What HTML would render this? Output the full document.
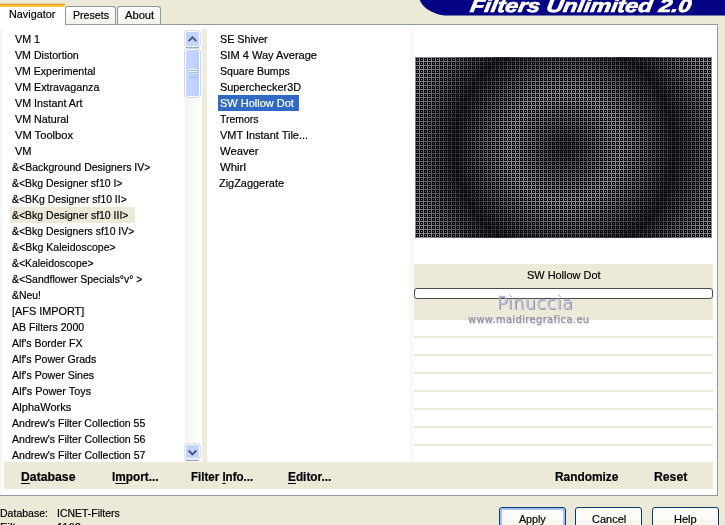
<!DOCTYPE html>
<html lang="en"><head><meta charset="utf-8"><title>Filters Unlimited 2.0</title>
<style>
html,body{margin:0;padding:0}
body{width:725px;height:525px;overflow:hidden;background:#ECE9D8;position:relative;font-family:"Liberation Sans",sans-serif;font-size:12px;color:#000}
.a{position:absolute;box-sizing:border-box}
.t{position:absolute;white-space:pre;transform-origin:0 0;line-height:20px;height:20px;font-size:11.6px;-webkit-text-stroke:0.2px}
.t.b{font-weight:bold;font-size:12.4px}
.t.b u{text-decoration-thickness:1px;text-underline-offset:1.7px}
.t.ban{font-weight:bold;font-style:italic;font-size:18.5px;color:#FFFFF6;-webkit-text-stroke:0.7px}
.sk{display:inline-block;transform:skewX(-7deg);transform-origin:0 100%}
.t.wm1{font-family:"DejaVu Sans Light","DejaVu Sans","Liberation Sans",sans-serif;font-weight:200;font-size:18.5px;letter-spacing:0.4px;color:#B6B8DE;-webkit-text-stroke:0.5px;text-shadow:1px 1px 0 #7c7c88}
.t.wm2{font-family:"DejaVu Sans","Liberation Sans",sans-serif;font-size:11px;letter-spacing:0.5px;color:#8C8CA6;text-shadow:1px 1px 1px #d0d0d8}
/* panel */
#panel{left:0;top:24px;width:718px;height:472px;background:#fff;border:1px solid #919B9C;border-left:0}
#banner{left:400px;top:0}
.tab{top:6px;height:18px;border:1px solid #919B9C;border-bottom:0;border-radius:3px 3px 0 0;background:linear-gradient(#FFFFFF,#F3F3EC)}
#tab0{left:0;top:3px;width:65.3px;height:22px;background:#fff;border-radius:0 2px 0 0;overflow:hidden}
#tab0:before{content:"";position:absolute;left:0;right:0;top:0;height:4px;background:linear-gradient(#EACDA4 0,#EACDA4 1px,#E89A33 1px,#E89A33 2px,#FFC73C 2px)}
.sep{background:#EFECDD}
.hl{background:#ECE9D8}
.sel{background:#316AC5}
#bar{left:4px;top:462px;width:709px;height:27px;background:#ECE9D8}
#rp{left:414px;top:30px;width:299px;height:432px;background:#fff}
.row{left:414px;width:299px;height:2px;background:#ECE9D8}
#prog{left:414px;top:288px;width:299px;height:11px;border:1px solid #4a4a4a;border-radius:3px;background:#fff}
.btn{top:507px;height:24px;width:67px;border:1px solid #003C74;border-radius:3px;background:linear-gradient(#FFFFFF,#F3F2EA)}
#bt0{box-shadow:inset 0 0 0 2px #A9C0F0}
/* scrollbar */
#sb{left:185px;top:30px;width:17px;height:432px;background:linear-gradient(90deg,#F6F5F1,#FEFEFC)}
.sbb{left:184.9px;width:15.4px;height:15.7px;background:#C3D5FD;border:1.1px solid #fff;border-radius:2.5px;box-shadow:0 0 0 0.5px #B4C4E8}
#thumb{left:184.8px;top:48.5px;width:15.4px;height:48.3px;background:linear-gradient(90deg,#C8D8FD,#BACDFB);border:1.2px solid #fff;border-radius:2.5px;box-shadow:0 0 0 0.5px #98B0E8}
#texts{position:absolute;left:0;top:0;width:725px;height:525px;will-change:transform}
.sbl{left:186px;width:13.3px;height:1px;background:#8EAAE6}

</style></head>
<body>
<svg class="a" id="banner" width="325" height="17" viewBox="400 0 325 17"><path d="M419.8,0 C421.5,6 431,14 444.5,15.6 L725,15.6 L725,0 Z" fill="#030384"/></svg>
<div class="a" id="panel"></div>
<div class="a tab" style="left:65px;width:51px"></div>
<div class="a tab" style="left:117px;width:44px"></div>
<div class="a" id="tab0"></div>
<div class="a sep" style="left:202px;top:29px;width:5px;height:433px"></div>
<div class="a" style="left:409px;top:29px;width:5px;height:433px;background:#FAF9F5"></div>
<div class="a hl" style="left:10px;top:207px;width:125px;height:16px"></div>
<div class="a sel" style="left:218px;top:95px;width:81px;height:16px"></div>
<div class="a" id="ledge" style="left:0;top:29px;width:2px;height:465px;background:#F7F6F2"></div>
<div class="a" id="sb"></div>
<div class="a sbb" style="top:31px"><svg width="14" height="14" viewBox="0 0 14 14" style="position:absolute;left:0;top:0"><path d="M2.6 9.1 L6.4 5.35 L10.3 9.1" fill="none" stroke="#44557D" stroke-width="1.9"/></svg></div>
<div class="a" id="thumb"><svg width="14" height="47" viewBox="0 0 14 47" style="position:absolute;left:0;top:0"><path d="M3 19.5h8M3 21.6h8M3 23.8h8M3 25.9h8" stroke="#F4F8FF" stroke-width="1"/><path d="M3.5 20.5h8M3.5 22.6h8M3.5 24.8h8M3.5 26.9h8" stroke="#9DB8F6" stroke-width="1"/></svg></div>
<div class="a sbl" style="top:47px"></div>
<div class="a sbl" style="top:460px"></div>
<div class="a sbb" style="top:443.6px"><svg width="14" height="14" viewBox="0 0 14 14" style="position:absolute;left:0;top:0"><path d="M2.7 5.5 L6.4 9.4 L10.25 5.5" fill="none" stroke="#44557D" stroke-width="1.9"/></svg></div>
<div class="a" id="rp"></div>
<svg class="a" id="prev" style="left:415px;top:57px" width="297" height="181" viewBox="0 0 297 181">
<defs>
<radialGradient id="rg" gradientUnits="userSpaceOnUse" cx="150" cy="91" r="110" spreadMethod="reflect">
<stop offset="0" stop-color="#34343a"/><stop offset="0.5" stop-color="#92929f"/><stop offset="1" stop-color="#2a2a30"/>
</radialGradient>
<pattern id="pt" width="4" height="4" patternUnits="userSpaceOnUse"><path d="M1 1h3v3h-3z M2 2v1h1v-1z" fill="#000" fill-rule="evenodd"/></pattern>
</defs>
<rect width="297" height="181" fill="url(#rg)"/>
<rect width="297" height="181" fill="url(#pt)"/>
</svg>
<div class="a" style="left:414px;top:264px;width:299px;height:56px;background:#ECE9D8"></div>
<div class="a" id="prog"></div>
<div class="a row" style="top:336px"></div>
<div class="a row" style="top:354px"></div>
<div class="a row" style="top:372px"></div>
<div class="a row" style="top:390px"></div>
<div class="a row" style="top:408px"></div>
<div class="a row" style="top:426px"></div>
<div class="a row" style="top:444px"></div>
<div class="a" id="bar"></div>
<div class="a btn" id="bt0" style="left:499px"></div>
<div class="a btn" style="left:575px"></div>
<div class="a btn" style="left:652px"></div>

<div id="texts">
<span class="t r" style="left:14.81px;top:28.70px;transform:scaleX(0.9255)">VM 1</span>
<span class="t r" style="left:14.81px;top:44.70px;transform:scaleX(0.9167)">VM Distortion</span>
<span class="t r" style="left:14.81px;top:60.70px;transform:scaleX(0.9106)">VM Experimental</span>
<span class="t r" style="left:14.81px;top:76.70px;transform:scaleX(0.9225)">VM Extravaganza</span>
<span class="t r" style="left:14.81px;top:92.70px;transform:scaleX(0.9277)">VM Instant Art</span>
<span class="t r" style="left:14.81px;top:108.70px;transform:scaleX(0.9261)">VM Natural</span>
<span class="t r" style="left:14.80px;top:124.70px;transform:scaleX(0.9613)">VM Toolbox</span>
<span class="t r" style="left:14.80px;top:140.70px;transform:scaleX(0.9481)">VM</span>
<span class="t r" style="left:12.23px;top:156.70px;transform:scaleX(0.9062)">&amp;&lt;Background Designers IV&gt;</span>
<span class="t r" style="left:12.23px;top:172.70px;transform:scaleX(0.9018)">&amp;&lt;Bkg Designer sf10 I&gt;</span>
<span class="t r" style="left:12.23px;top:188.70px;transform:scaleX(0.8993)">&amp;&lt;BKg Designer sf10 II&gt;</span>
<span class="t r" style="left:12.23px;top:204.70px;transform:scaleX(0.9035)">&amp;&lt;Bkg Designer sf10 III&gt;</span>
<span class="t r" style="left:12.23px;top:220.70px;transform:scaleX(0.8991)">&amp;&lt;Bkg Designers sf10 IV&gt;</span>
<span class="t r" style="left:12.23px;top:236.70px;transform:scaleX(0.9086)">&amp;&lt;Bkg Kaleidoscope&gt;</span>
<span class="t r" style="left:12.23px;top:252.70px;transform:scaleX(0.8972)">&amp;&lt;Kaleidoscope&gt;</span>
<span class="t r" style="left:12.23px;top:268.70px;transform:scaleX(0.9022)">&amp;&lt;Sandflower Specials°v° &gt;</span>
<span class="t r" style="left:12.23px;top:284.70px;transform:scaleX(0.8992)">&amp;Neu!</span>
<span class="t r" style="left:11.98px;top:300.70px;transform:scaleX(0.9373)">[AFS IMPORT]</span>
<span class="t r" style="left:11.53px;top:316.70px;transform:scaleX(0.9114)">AB Filters 2000</span>
<span class="t r" style="left:11.53px;top:332.70px;transform:scaleX(0.9077)">Alf&#x27;s Border FX</span>
<span class="t r" style="left:11.53px;top:348.70px;transform:scaleX(0.9112)">Alf&#x27;s Power Grads</span>
<span class="t r" style="left:11.53px;top:364.70px;transform:scaleX(0.9144)">Alf&#x27;s Power Sines</span>
<span class="t r" style="left:11.53px;top:380.70px;transform:scaleX(0.9368)">Alf&#x27;s Power Toys</span>
<span class="t r" style="left:11.52px;top:396.70px;transform:scaleX(0.9508)">AlphaWorks</span>
<span class="t r" style="left:11.53px;top:412.70px;transform:scaleX(0.9099)">Andrew&#x27;s Filter Collection 55</span>
<span class="t r" style="left:11.53px;top:428.70px;transform:scaleX(0.9101)">Andrew&#x27;s Filter Collection 56</span>
<span class="t r" style="left:11.53px;top:444.70px;transform:scaleX(0.9103)">Andrew&#x27;s Filter Collection 57</span>
<span class="t r" style="left:219.66px;top:28.70px;transform:scaleX(0.9251)">SE Shiver</span>
<span class="t r" style="left:219.64px;top:44.70px;transform:scaleX(0.9529)">SIM 4 Way Average</span>
<span class="t r" style="left:219.67px;top:60.70px;transform:scaleX(0.9098)">Square Bumps</span>
<span class="t r" style="left:219.65px;top:76.70px;transform:scaleX(0.9389)">Superchecker3D</span>
<span class="t r" style="left:219.65px;top:92.70px;transform:scaleX(0.9482);color:#fff">SW Hollow Dot</span>
<span class="t r" style="left:219.73px;top:108.70px;transform:scaleX(0.9021)">Tremors</span>
<span class="t r" style="left:219.50px;top:124.70px;transform:scaleX(0.9444)">VMT Instant Tile...</span>
<span class="t r" style="left:219.64px;top:140.70px;transform:scaleX(0.9713)">Weaver</span>
<span class="t r" style="left:219.64px;top:156.70px;transform:scaleX(0.9820)">Whirl</span>
<span class="t r" style="left:219.49px;top:172.70px;transform:scaleX(0.9425)">ZigZaggerate</span>
<span class="t r" style="left:8.84px;top:3.80px;transform:scaleX(0.9327)">Navigator</span>
<span class="t r" style="left:72.76px;top:5.00px;transform:scaleX(0.9156)">Presets</span>
<span class="t r" style="left:125.32px;top:5.00px;transform:scaleX(0.9634)">About</span>
<span class="t r" style="left:526.65px;top:265.40px;transform:scaleX(0.9430)">SW Hollow Dot</span>
<span class="t b" style="left:21.04px;top:467.00px;transform:scaleX(0.9883)"><u>D</u>atabase</span>
<span class="t b" style="left:111.97px;top:467.00px;transform:scaleX(0.9518)">I<u>m</u>port...</span>
<span class="t b" style="left:190.88px;top:467.00px;transform:scaleX(0.9306)">Filter <u>I</u>nfo...</span>
<span class="t b" style="left:287.97px;top:467.00px;transform:scaleX(0.9541)"><u>E</u>ditor...</span>
<span class="t b" style="left:554.86px;top:467.00px;transform:scaleX(0.9595)">Randomize</span>
<span class="t b" style="left:654.15px;top:467.00px;transform:scaleX(0.9856)">Reset</span>
<span class="t r" style="left:0.36px;top:502.50px;transform:scaleX(0.9081)">Database:</span>
<span class="t r" style="left:56.84px;top:502.50px;transform:scaleX(0.9013)">ICNET-Filters</span>
<span class="t r" style="left:0.26px;top:516.50px;transform:scaleX(1.0306)">Filters:</span>
<span class="t r" style="left:57.09px;top:516.50px;transform:scaleX(0.9573)">1162</span>
<span class="t r" style="left:518.63px;top:508.50px;transform:scaleX(0.9211)">Apply</span>
<span class="t r" style="left:592.11px;top:508.50px;transform:scaleX(0.9479)">Cancel</span>
<span class="t r" style="left:673.92px;top:508.50px;transform:scaleX(0.9516)">Help</span>
<span class="t ban" style="left:468.87px;top:-4.30px;transform:scaleX(1.2565)"><span class="sk">Filters Unlimited 2.0</span></span>
<span class="t wm1" style="left:496.99px;top:292.70px;transform:scaleX(0.9621)">Pinuccia</span>
<span class="t wm2" style="left:468.38px;top:310.20px;transform:scaleX(0.8881)">www.maidiregrafica.eu</span>
</div>
</body></html>
